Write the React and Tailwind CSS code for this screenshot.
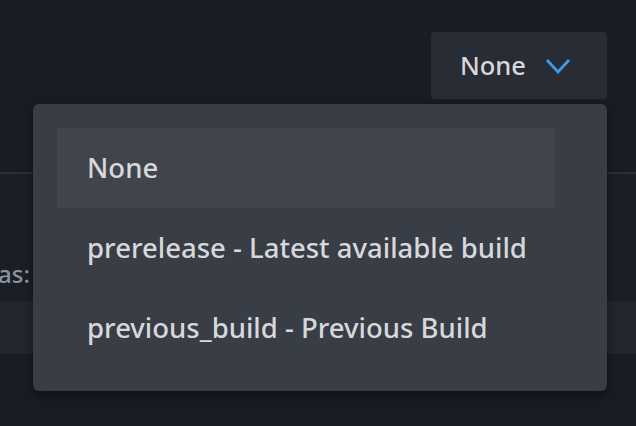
const options = [
  { id: "none", label: "None" },
  { id: "prerelease", label: "prerelease - Latest available build" },
  { id: "previous_build", label: "previous_build - Previous Build" },
];

export default function App() {
  const selected = "none";

  return (
    <div
      className="relative w-[636px] h-[426px] overflow-hidden bg-[#181c24] text-[#d6d8dc] font-medium"
      style={{ fontFamily: '"Noto Sans", "Open Sans", sans-serif' }}
    >
      {/* page underneath */}
      <div className="flex justify-end pt-8 pr-[29px]">
        <button className="flex items-center h-[67px] w-[176px] pl-[29px] rounded-[4px] bg-[#282c34] text-[25.5px] leading-none">
          <span>None</span>
          <svg width="26" height="17" viewBox="0 0 26 17" className="ml-[19px] mt-[2px]">
            <polyline points="2,2 13,14 24,2" fill="none" stroke="#3f9ceb" strokeWidth="2.8" />
          </svg>
        </button>
      </div>
      <div className="mt-[73px] h-[2px] bg-[#2c3038]" />
      <div className="flex h-[127px] bg-[#1b1e25]">
        <span className="mt-[88px] -ml-[2px] text-[24px] leading-none text-[#8a95a4]">as:</span>
      </div>
      <div className="h-[53px] bg-[#23262e]" />

      {/* dropdown menu */}
      <div className="absolute left-[33px] top-[104px] w-[574px] h-[287px] rounded-[6px] bg-[#393d46] shadow-[0_4px_12px_rgba(0,0,0,0.4)] pt-6 pl-6">
        <ul className="w-[498px]">
          {options.map((o) => (
            <li
              key={o.id}
              className={`flex items-center h-20 pl-[30px] text-[27.5px] ${
                o.id === selected ? "bg-[#40444d]" : ""
              }`}
            >
              {o.label}
            </li>
          ))}
        </ul>
      </div>
    </div>
  );
}
